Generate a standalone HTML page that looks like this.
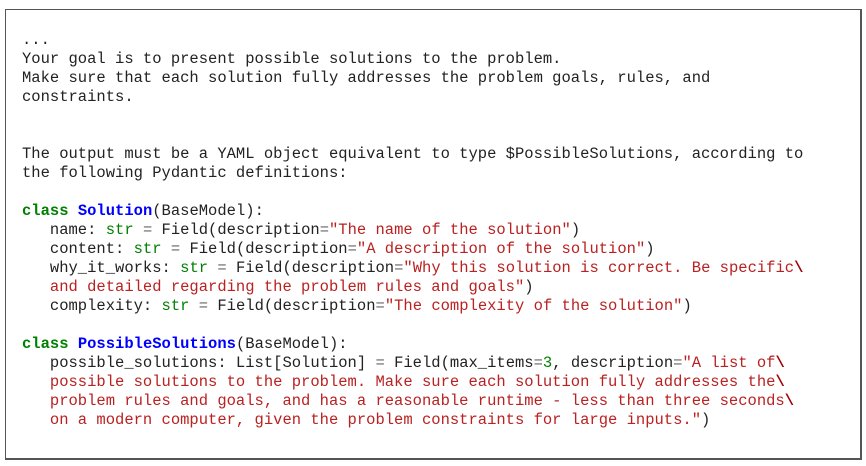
<!DOCTYPE html>
<html><head><style>
html,body{margin:0;padding:0;background:#fff;width:866px;height:466px;overflow:hidden}
.box{position:absolute;left:5px;top:9px;width:854px;height:448px;border:1px solid #555;border-right-width:2px;border-bottom-width:2px}
pre{position:absolute;left:22px;top:31px;margin:0;font-family:"Liberation Mono",monospace;font-size:15.5px;line-height:19px;color:#222}
.k{color:#008000;font-weight:bold}.c{color:#0000ff;font-weight:bold}.t{color:#008000}.s{color:#ba2121}.o{color:#666}.b{color:#a00000;font-weight:bold}
</style></head><body>
<div class="box"></div>
<pre>...
Your goal is to present possible solutions to the problem.
Make sure that each solution fully addresses the problem goals, rules, and
constraints.


The output must be a YAML object equivalent to type $PossibleSolutions, according to
the following Pydantic definitions:

<span class="k">class</span> <span class="c">Solution</span>(BaseModel):
   name: <span class="t">str</span> <span class="o">=</span> Field(description<span class="o">=</span><span class="s">"The name of the solution"</span>)
   content: <span class="t">str</span> <span class="o">=</span> Field(description<span class="o">=</span><span class="s">"A description of the solution"</span>)
   why_it_works: <span class="t">str</span> <span class="o">=</span> Field(description<span class="o">=</span><span class="s">"Why this solution is correct. Be specific</span><span class="b">\</span>
<span class="s">   and detailed regarding the problem rules and goals"</span>)
   complexity: <span class="t">str</span> <span class="o">=</span> Field(description<span class="o">=</span><span class="s">"The complexity of the solution"</span>)

<span class="k">class</span> <span class="c">PossibleSolutions</span>(BaseModel):
   possible_solutions: List[Solution] <span class="o">=</span> Field(max_items<span class="o">=</span><span class="t">3</span>, description<span class="o">=</span><span class="s">"A list of</span><span class="b">\</span>
<span class="s">   possible solutions to the problem. Make sure each solution fully addresses the</span><span class="b">\</span>
<span class="s">   problem rules and goals, and has a reasonable runtime - less than three seconds</span><span class="b">\</span>
<span class="s">   on a modern computer, given the problem constraints for large inputs."</span>)</pre>
</body></html>
